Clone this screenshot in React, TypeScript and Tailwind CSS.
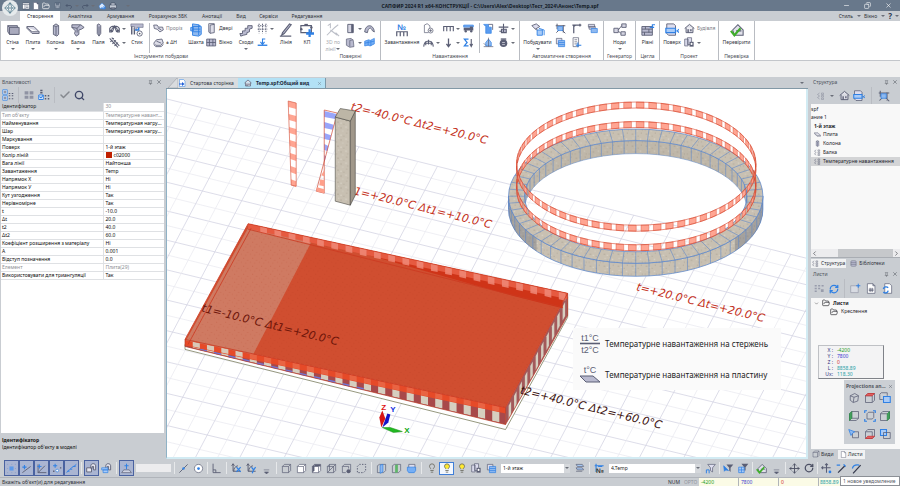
import type { ReactNode } from "react";
import { Check, ChevronDown, ChevronLeft, ChevronRight, Copy, FolderOpen, Lightbulb, Minus, Move, Pin, RefreshCw, RotateCw, Search, X } from "lucide-react";

const D = "#5a5e74";
const B = "#2f80e4";
const L = "#b9bacf";

// every drawing sits on a 16x16 board
const icons: Record<string, ReactNode> = {
  wall: <><path d="M2 3h11v10H4l-2-3z" fill="#a9aabd" stroke={D} /><path d="M2 3l2 2v8M4 5h11v8H4" fill="#a9aabd" stroke={D} /></>,
  slab: <path d="M1 4h8l6 6v2H7L1 6zM1 5l6 5h8" fill="#d5d5e2" stroke={D} />,
  column: <path d="M5 3l3-2 3 2v10l-2 2-4-2zM5 3l3 1 3-1M8 4v10" fill={L} stroke={D} />,
  beam: <path d="M1 2h10l4 3-3 2-3 1v5l-3 2-2-3 1-3-4-4zM11 2L7 6 1 5M7 6v5" fill={L} stroke={D} />,
  pile: <path d="M6 2l2-1 2 2v9l-2 3-2-3zM8 4v10" fill={L} stroke={D} />,
  truss: <path d="M1 13V8c2-5 12-5 14 0v5h-3V9L8 4 4 9v4zM5 13l3-8 3 8M1 9l3 4M15 9l-3 4" fill="none" stroke={D} strokeWidth="1.5" />,
  brace: <path d="M1 2l12 13M4 1l11 12M2 7l5-5M5 10l5-5M8 13l5-5" fill="none" stroke={D} strokeWidth="1.5" />,
  joint: <><path d="M2 3v10M5 5v8" stroke={D} strokeWidth="1.6" /><path d="M1 1h14v4H8v3H5V4H1z" fill={L} stroke={D} strokeWidth=".6" /><path d="M6 8h4V5" fill="none" stroke={B} strokeWidth="1.6" /><circle cx="11" cy="12" r="3" fill="#fff" stroke={D} /><circle cx="11" cy="12" r="1" fill={D} /></>,
  opening: <path d="M1 3h5l2 3h6l1 4-5 3-4-4-4-1zM7 7l5 3" fill="#dddde8" stroke={D} strokeWidth="1.2" />,
  shift: <path d="M1 9l4-5 8-1 2 6-4 3H4zM1 11l3 3h8l3-3M5 6l7 3" fill="#dddde8" stroke={D} strokeWidth="1.2" />,
  shaft: <path d="M4 1l7 1 3 2v9l-3 2-7-1zM4 4h9M4 7h9M4 10h9M11 2v12M2 5h3v4H2z" fill="#8fb9f0" stroke={B} />,
  door: <path d="M4 1h8v13l-6 1V3l6-1M4 1v12l2 2" fill="#dddde8" stroke={D} strokeWidth="1.2" />,
  window: <path d="M1 3h13v10H1zM5 3v10M10 3v10M1 8h13" fill={L} stroke={D} strokeWidth="1.2" />,
  stairs: <path d="M1 12h3v-3h3V6h3V3h5v3l-3 1v3l-3 1v2l-4 1-3 1z" fill={L} stroke={D} />,
  grid: <path d="M3 1v14M8 1v14M13 1v14M1 4h14M1 9h14" fill="none" stroke={D} strokeDasharray="2 1.4" strokeWidth="1.4" />,
  level: <><path d="M1 12h14" stroke={B} strokeWidth="2" /><path d="M12 3H8v6M5 7l3 4 3-4" fill="none" stroke={B} strokeWidth="1.6" /></>,
  line: <><path d="M4 11L12 1l2 1-8 10-3 2z" fill={L} stroke={D} strokeWidth="1.2" /><path d="M1 15h13" stroke={D} strokeWidth="1.4" /></>,
  kp: <><path d="M1 3h12v8H1z" fill="#fff" stroke={D} strokeWidth="1.3" /><path d="M5 1h4v2H5z" fill={D} /><circle cx="1.500" cy="7" r="1.400" fill={D} /><circle cx="13" cy="5" r="1.400" fill={D} /><path d="M11 7v9M7 12h9" stroke={B} strokeWidth="2.6" /></>,
  surf3d: <path d="M1 14l5-5c3-3 5-5 8-7M2 3l3-2v5M5 8l8 6M11 11l4 4" fill="none" stroke="#bcbfc8" strokeWidth="1.2" />,
  panel: <><path d="M4 2h8v12H4z" fill="#d5d5e2" stroke={D} strokeWidth="1.3" /><path d="M9 2h3v12H9z" fill={D} /></>,
  shell: <path d="M1 13C2 1 14 1 15 13l-3-2C10 5 6 7 5 14z" fill={L} stroke={D} strokeWidth="1.3" />,
  solid: <path d="M2 3l7-1 3 3 1 9-6 1-5-3zM7 5l5-1M7 5v9" fill={L} stroke={D} />,
  bluebox: <path d="M1 6l6-2 2 1 6-3v8l-6 3-3-1-5 1zM6 5v7M10 5v8M1 9l14-3" fill="#75aef5" stroke={B} />,
  number: <><text x="8" y="8" textAnchor="middle" fontSize="9" fontWeight="700" fontFamily="Liberation Sans" fill={B}>№</text><path d="M2 15v-5h12v5M6 10v5M10 10v5" fill="none" stroke={D} strokeWidth="1.4" /></>,
  loadbox: <><path d="M2 14V3l4-2 4 3v4M2 14h6" fill="none" stroke={D} /><circle cx="11" cy="11" r="3.6" fill="#eee" stroke={D} /><path d="M9 11h4M11 9v4" stroke={D} /></>,
  comb: <path d="M1 12V5h14v7M5.500 5v7M10.500 5v7" fill="none" stroke={D} strokeWidth="1.6" />,
  car: <><path d="M1 3h14v3H1z" fill="#79aef2" stroke={B} /><path d="M1 7h9v4H1zM10 5h4l1 3v3h-5z" fill={D} /><circle cx="4" cy="12" r="1.700" fill={D} /><circle cx="12" cy="12" r="1.700" fill={D} /></>,
  arcload: <path d="M1 14c1-11 13-11 14 0M4 12V6M8 11V4M12 12V6M3 9h9" fill="none" stroke={D} strokeWidth="1.6" />,
  down: <path d="M8 2v12M5 10l3 4 3-4" fill="none" stroke={D} strokeWidth="1.9" />,
  sum: <><path d="M8 3H2l4 5-4 5h6" fill="none" stroke={B} strokeWidth="1.8" /><path d="M12 3v10M10 10l2 4 2-4" fill="none" stroke={D} strokeWidth="1.6" /></>,
  wind: <><path d="M1 2h7v4h4v9H4V5z" fill="#5a9cf0" stroke={B} /><path d="M8 2h6v8" fill="none" stroke={D} strokeWidth="1.2" /></>,
  bluehouse: <><path d="M4 8l4-5 4 5v5H4z" fill="#8fb9f0" stroke={B} /><path d="M1 14h14M8 1v13M1 9l3 3" fill="none" stroke={D} /></>,
  crane: <path d="M1 6h14M8 1v13M5 14h7V9H5zM2 12h4" fill={L} stroke={D} strokeWidth="1.6" />,
  weight: <><circle cx="8" cy="9" r="5.500" fill={D} /><path d="M4 3h8" stroke={D} strokeWidth="2" /><path d="M6 8h4M6 11h4" stroke="#e6e6ee" /></>,
  build: <><path d="M1 3l5-2 4 3-5 3zM5 7l4 2" fill="#dde" stroke={D} /><path d="M7 8h6v6H7z" fill="#a9cbf7" stroke={B} /><path d="M9 6l6 2v6" fill="none" stroke={B} /></>,
  mesh: <><path d="M1 4h14M3 1v8M12 3v11M2 14l4-4M10 10l5 5" fill="none" stroke={D} strokeWidth="1.4" /><path d="M4 5h7v6H4z" fill="#8fb9f0" stroke={B} /></>,
  frame: <path d="M4 15V3h11M2 3h4M4 5l3-2M13 1v4" fill="none" stroke={D} strokeWidth="1.8" />,
  layers: <><path d="M2 2h8v8H2z" fill="#dde" stroke={D} /><path d="M5 5h9v9H5zM5 8h9M5 11h9" fill="#8fb9f0" stroke={B} /></>,
  steps: <><path d="M2 2h9v4H2zM3 5h9v4H3z" fill="#dde" stroke={D} /><path d="M6 8h9v6H6z" fill="#8fb9f0" stroke={B} /></>,
  sheet: <><path d="M3 1h8v13H3zM5 4h4M5 7h4M5 10h4" fill="#fff" stroke={D} /><path d="M10 8v7M7 12h8" stroke={B} strokeWidth="1.6" /></>,
  nodes: <path d="M1 6h5v5H1zM10 1h5v4h-5zM9 10h5v4H9zM6 8l4-5M6 9l3 3" fill="#d5d5e2" stroke={D} />,
  brick: <><path d="M1 4h12v10H1zM1 7h12M1 10.500h12M5 4v3M9 7v4M4 10.500V14" fill={L} stroke={D} /><path d="M16 2h-3v4M10 5h5" fill="none" stroke={B} strokeWidth="1.3" /></>,
  storey: <><path d="M2 1h8l2 2v11H4l-2-2z" fill="#dde" stroke={D} /><path d="M1 6h11v5H1z" fill="#a9cbf7" stroke={B} strokeWidth="1.4" /><path d="M16 7l-2 2 2 2M13 9h2" fill="none" stroke={B} strokeWidth="1.3" /></>,
  house: <><path d="M1 8l7-6 7 6M3 7v7h10V7" fill="#e1e1ea" stroke={D} strokeWidth="1.4" /><path d="M5 9h2v5H5zM9 9h2v3H9z" fill={D} /></>,
  copybox: <><path d="M1 3h5v10H1zM5 1h6v10H5z" fill="#dde" stroke={D} /><path d="M8 7h6v7H8z" fill={D} /><circle cx="11" cy="10" r="1.500" fill="#fff" /></>,
  verify: <><path d="M3 8l6-6 6 6v6H5zM7 9h6" fill="#e1e1ea" stroke={D} strokeWidth="1.2" /><path d="M1 9l4 5 7-8" fill="none" stroke="#3fae2a" strokeWidth="2.4" /></>,
  tree: <><path d="M1 1h6v6H1zM1 9h6v6H1z" fill="#eaf2fd" stroke={B} /><path d="M2 4h4M4 2v4M2 12h4M4 10v4" stroke={D} /><path d="M9 6h2M13 6h2M9 13h2M13 13h2M9 9h2M13 9h2" stroke={D} strokeWidth="1.6" /></>,
  cols: <path d="M1 2h6v5H1zM9 2h6v5H9zM1 9h6v5H1zM9 9h6v5H9z" fill="#8f93a3" />,
  treecheck: <><path d="M1 8h6v6H1z" fill="#fff" stroke={B} strokeWidth="1.3" /><path d="M2 10l2 2 3-4" fill="none" stroke={B} strokeWidth="1.500" /><path d="M3 2h3M9 9h2M13 9h2M9 13h2M13 13h2M3 5h3" stroke={D} strokeWidth="1.8" /></>,
  cube: <path d="M2 5l3-3h9v9l-3 3H2zM2 5h9v9M11 5l3-3" fill="none" stroke={D} />,
  cubeWhite: <path d="M2 5l3-3h9v9l-3 3H2zM2 5h9v9M11 5l3-3" fill="#fff" stroke={D} />,
  cubeDark: <><path d="M2 5l3-3h9v9l-3 3H2zM2 5h9v9" fill="#fff" stroke={D} /><path d="M2 5l3-3v9l-3 3z" fill={D} /><path d="M5 2h9v3H5z" fill={D} /></>,
  cubeCut: <path d="M2 5l3-3h9v9l-3 3H2zM2 5h9v9M2 14L14 2M5 2v9" fill="none" stroke={D} />,
  cubeEye: <><path d="M2 5l3-3h9v9M2 5v9h5M2 5h9v3" fill="none" stroke={D} /><circle cx="11" cy="12" r="3" fill={D} /></>,
  cubeDash: <path d="M2 5l3-3h9v9l-3 3H2z" fill="none" stroke={D} strokeDasharray="2 2" strokeWidth="1.400" />,
  cubeBlue: <><path d="M2 4l3-2h9v9l-3 3H2z" fill="none" stroke={D} /><path d="M6 3l4-1v11l-4 2z" fill="#8fb9f0" stroke={B} /></>,
  cubeGreen: <><path d="M2 4l3-2h9v9l-3 3H2z" fill="none" stroke={D} /><path d="M6 3l4-1v11l-4 2z" fill="#5fb56a" /></>,
  cubeFull: <><path d="M4 2h9v8H4z" fill="#dde" stroke={D} /><path d="M2 6h12v5l-2 3H4l-2-3z" fill="#75aef5" stroke={B} /></>,
  cubeTop: <><path d="M2 5l3-3h9v9l-3 3H2zM2 5h9v9" fill="none" stroke={D} /><path d="M2 5l3-3h9l-3 3z" fill="#e06060" stroke="#c33" /></>,
  cubeBottom: <><path d="M2 5l3-3h9v9l-3 3H2zM2 5h9v9" fill="none" stroke={D} /><path d="M2 14l3-3h9l-3 3z" fill="#e06060" stroke="#c33" /></>,
  cubeLeft: <><path d="M2 5l3-3h9v9l-3 3H2zM5 2v9h9" fill="none" stroke={D} /><path d="M2 5l3-3v9l-3 3z" fill="#41a05a" stroke="#2d8a47" /></>,
  cubeRight: <><path d="M2 5l3-3h9v9l-3 3H2zM2 5h9" fill="none" stroke={D} /><path d="M11 5l3-3v9l-3 3z" fill="#41a05a" stroke="#2d8a47" /></>,
  cubeFront: <><path d="M1 3l2-2h8v4M1 3v7h4" fill="none" stroke={D} /><path d="M6 6h9v8H6z" fill="#a9cbf7" stroke={B} strokeWidth="1.4" /></>,
  cubeIso: <path d="M3 5l6-3 5 3-1 7-6 2-4-3zM3 5l5 2 6-2M8 7l-1 7" fill="none" stroke={D} />,
  cubeFit: <><path d="M4 5l2-2h7v7l-2 2H4z" fill="none" stroke={D} /><path d="M1 4V1h3M12 1h3v3M15 12v3h-3M4 15H1v-3" fill="none" stroke={B} strokeWidth="1.600" /></>,
  cubePick: <><path d="M6 5h8v8H6z" fill="none" stroke={D} /><path d="M1 2l3 8 2-3 3-2z" fill="#8fb9f0" stroke={B} /></>,
  cubeTwo: <><path d="M2 2h8v8H2z" fill="#a9cbf7" stroke={B} strokeWidth="1.4" /><path d="M6 6h9v8H6z" fill="none" stroke={D} /></>,
  snapPoint: <><path d="M5 5h6v6H5z" fill="#5e9bea" /><path d="M2 2h1M8 2h1M13 2h1M2 8h1M13 8h1M2 14h1M8 14h1M13 14h1" stroke="#6f8fc4" /></>,
  snapLine: <><path d="M2 14L14 5" stroke={D} strokeWidth="1.3" /><path d="M2 6h6M5 3v6" stroke={B} strokeWidth="1.5" /></>,
  snapAngle: <><path d="M3 2v12h12M3 14L13 4" fill="none" stroke={D} strokeWidth="1.3" /><path d="M2 5h6M5 2v6" stroke={B} strokeWidth="1.4" /></>,
  snapDots: <><path d="M3 4h6M6 1v6" stroke={B} strokeWidth="1.5" /><circle cx="9" cy="11" r="2" fill="#fff" stroke={B} /><path d="M3 12h2M13 7h2" stroke={D} strokeWidth="2" /></>,
  snapCurve: <path d="M1 14c3-5 4-3 6-6s4-2 8-6M2 12h3M6 9h3M11 5h3" fill="none" stroke={B} strokeWidth="1.4" />,
  magnet: <path d="M1 7h7v6H1zM7 8V4c0-4 7-4 7 0v6h-3V5H9v3" fill="#e5e5ee" stroke={D} strokeWidth="1.3" />,
  magnetBlue: <><path d="M7 8V4c0-4 7-4 7 0v6h-3V5H9v3" fill="#e5e5ee" stroke={D} strokeWidth="1.3" /><path d="M1 7h9v3H1zM3 10h7v4H3z" fill="#a9cbf7" stroke={B} /></>,
  plane: <><path d="M1 14l3-4h8l3 4z" fill="#d0d4e4" stroke={D} /><path d="M8 1v8M5 4h6" stroke={B} strokeWidth="1.4" /></>,
  seg: <><path d="M2 14L14 2" stroke={D} strokeWidth="1.3" /><circle cx="8" cy="8" r="1.800" fill={B} /></>,
  center: <><circle cx="8" cy="8" r="6" fill="#fff" stroke={D} /><circle cx="8" cy="8" r="2" fill={B} /></>,
  ortho: <path d="M3 1v13h11M3 10h4v4" fill="none" stroke={D} strokeWidth="1.3" />,
  rotX: <><path d="M3 2v10h11M1 4l2-3 2 3M4 12a8 8 0 0 1 6-8" fill="none" stroke={D} strokeWidth="1.4" /><path d="M8 6l6 7M14 6l-6 7" stroke={B} strokeWidth="1.800" /></>,
  rotY: <><path d="M3 2v10h11M1 4l2-3 2 3M4 12a8 8 0 0 1 6-8" fill="none" stroke={D} strokeWidth="1.4" /><path d="M8 6l3 4 3-4M11 10l-2 5" fill="none" stroke={B} strokeWidth="1.800" /></>,
  more: <path d="M4 10h8M5 13h6l-3 3z" fill={D} stroke={D} strokeWidth=".8" />,
  stack: <path d="M3 2h9l2 3H5zM3 7h9l2 3H5zM3 12h9" fill="#a9cbf7" stroke={D} />,
  loadNo: <><path d="M1 4h13M3 1v12M6 5h6" fill="none" stroke={B} strokeWidth="1.600" /><text x="9" y="15" textAnchor="middle" fontSize="10" fontWeight="700" fontFamily="Liberation Sans" fill="#333">№</text></>,
  funnel: <><path d="M4 2h11l-4 5v6l-3-2V7z" fill="#dde" stroke={D} /><path d="M2 15v-5h4v5" fill="none" stroke={B} strokeWidth="1.4" /></>,
  funnelPick: <><path d="M5 2h10l-4 5v6l-2-2V7z" fill={D} /><path d="M1 4l1 8 2-2 4 1z" fill={B} stroke={B} /></>,
  funnelTable: <><path d="M5 1h10l-4 5v5H9V6z" fill={D} /><path d="M1 6h8v8H1zM1 10h8M5 6v8" fill="#a9cbf7" stroke={B} /></>,
  moveBlue: <><path d="M8 1v13M1 7h13M6 3l2-2 2 2M3 5L1 7l2 2" fill="none" stroke={D} strokeWidth="1.500" /><circle cx="13" cy="13" r="2" fill={B} /></>,
  edit: <><path d="M3 14L13 4" stroke="#34384c" strokeWidth="1.800" /><path d="M1 3h5M11 2l3 3" stroke={B} strokeWidth="2" /></>,
  editTwo: <><path d="M3 15L14 3" stroke="#34384c" strokeWidth="1.800" /><path d="M2 8c1-4 5-6 10-5" fill="none" stroke={B} strokeWidth="1.800" /></>,
  doc: <path d="M3 1h7l3 3v11H3zM10 1v3h3" fill="#fff" stroke={D} />,
  docHash: <><path d="M2 1h8l3 3v11H2zM10 1v3h3" fill="#fff" stroke={D} /><path d="M6 7v6M9 7v6M4 9h7M4 11h7" stroke={D} strokeWidth="1.1" /></>,
  docSync: <><path d="M4 1h7l3 3v11H4z" fill="#fff" stroke={D} /><path d="M2 9a4 4 0 0 1 7-2M9 11a4 4 0 0 1-7 2" fill="none" stroke={B} strokeWidth="2" /></>,
  gridgear: <path d="M1 3h3v2H1zM6 3h3v2H6zM11 3h3v2h-3zM1 7h3v2H1zM6 7h3v2H6zM1 11h3v2H1zM10 9h4v4h-4z" fill="#989cab" />,
  addpage: <><path d="M1 4h11v10H1z" fill="#d8dbe2" stroke="#9599a8" /><path d="M12 1v6M9 4h6" stroke={B} strokeWidth="1.4" /></>,
  lib: <path d="M2 3c0-2 12-2 12 0v10c0 2-12 2-12 0zM2 6h12M2 10h12" fill={L} stroke={D} />,
  load: <path d="M5 2L1 5l4 3-4 3 4 3M9 2h4v3H9zM9 7h4v3H9zM9 12h4v3H9z" fill="none" stroke={D} />,
  logo: <path d="M8 1l7 7-7 7-7-7zM1 8h14M8 1L5 8l3 7 3-7z" fill="#fff" stroke="#4d7688" />,
  save: <path d="M2 2h12v12H2zM5 2v4h6V2M4 14V9h8v5" fill="#aab4c2" stroke="#45526a" />,
  panels: <path d="M1 2h14v12H1zM1 5h14M6 5v9M8 8h5M8 11h5" fill="#fff" stroke="#38465c" />,
  undo: <path d="M5 4L2 7l3 3M2 7h8c4 0 4 6 0 6" fill="none" stroke="#46536a" strokeWidth="1.6" />,
  redo: <path d="M11 4l3 3-3 3M14 7H6c-4 0-4 6 0 6" fill="none" stroke="#46536a" strokeWidth="1.6" />,
  exportHouse: <><path d="M2 8l6-6 6 6v5H4z" fill="#d8e7fb" stroke={B} /><path d="M6 12h8M11 9l4 3-4 3" fill="none" stroke={B} strokeWidth="1.8" /></>,
  start: <><path d="M3 1h8l3 3v11H3z" fill="#fff" stroke={B} /><path d="M8 6l5 4-5 4v-3H2V9h6z" fill="#1f5fd8" /></>,
  print: <path d="M4 6V2h8v4M1 6h14v6H1zM4 12h8v2H4z" fill="#c4cbd6" stroke="#2f3b50" />,
};

const Icon = ({ name, className = "size-3" }: { name: string; className?: string }) => (
  <svg viewBox="0 0 16 16" className={`shrink-0 ${className}`} aria-hidden="true">{icons[name]}</svg>
);

const Arrow = () => (
  <svg viewBox="0 0 4 2" className="h-[2px] w-1 shrink-0" aria-hidden="true"><path d="M0 0h4L2 2z" fill="#6a6e78" /></svg>
);

const Tile = ({ icon, label, arrow, w, muted, second }: { icon: string; label: string; arrow?: boolean; w: string; muted?: boolean; second?: string }) => (
  <button className={`flex shrink-0 flex-col items-center ${w} ${muted ? "text-[#a4a7ad]" : ""}`}>
    <Icon name={icon} className="size-[14px]" />
    <span className="mt-[2px] whitespace-nowrap leading-[7px]">{label}</span>
    {second && <span className="flex items-center gap-px leading-[6px]">{second}<Arrow /></span>}
    {arrow && <span className="mt-[2px]"><Arrow /></span>}
  </button>
);

type Small = { icon: string; text?: string; arrow?: boolean; muted?: boolean };

const Pair = ({ items, w }: { items: Small[]; w: string }) => (
  <div className={`flex shrink-0 flex-col gap-[3px] ${w}`}>
    {items.map((it) => (
      <button key={it.icon} aria-label={it.text ?? it.icon} className={`flex h-[11px] items-center gap-[2px] whitespace-nowrap ${it.muted ? "text-[#7b7e86]" : ""}`}>
        <Icon name={it.icon} className="size-[11px]" />
        {it.text}
        {it.arrow && <Arrow />}
      </button>
    ))}
  </div>
);

const Group = ({ title, w, children }: { title: string; w: string; children: ReactNode }) => (
  <section className={`flex h-[39px] shrink-0 flex-col border-r border-[#b9bcc2] pt-[2px] ${w}`}>
    <div className="flex h-[30px]">{children}</div>
    <h2 className="text-center leading-[6px] text-[#4b4e55]">{title}</h2>
  </section>
);

const Rule = () => <span className="mx-[3px] w-px shrink-0 self-stretch bg-[#b9bcc2]" />;

const TitleBar = () => (
  <header className="flex h-[11px] shrink-0 items-center bg-[#68788b] pl-[22px]">
    <div className="flex w-[110px] items-center gap-[2px]">
      <Icon name="panels" className="size-2" />
      <Icon name="doc" className="size-2" />
      <FolderOpen className="size-2 text-white" />
      <Icon name="save" className="mx-[2px] size-[7px]" />
      <Icon name="undo" className="size-2" />
      <Arrow />
      <Icon name="redo" className="size-2" />
      <Arrow />
      <Icon name="exportHouse" className="ml-px size-2" />
      <Icon name="print" className="mx-px size-2" />
      <span className="ml-[6px]"><Arrow /></span>
    </div>
    <h1 className="flex-1 pl-6 text-center text-[5px] font-bold leading-[10px] text-[#141b26]">
      САПФИР 2024 R1 x64-КОНСТРУКЦІЇ - C:\Users\Alex\Desktop\Тест_2024\Анонс\Temp.spf
    </h1>
    <div className="flex w-[76px] gap-[14px] pl-[19px] text-white">
      <button aria-label="Згорнути"><Minus className="size-[7px]" /></button>
      <button aria-label="Розгорнути"><Copy className="size-[7px] -scale-x-100" /></button>
      <button aria-label="Закрити"><X className="size-[7px]" /></button>
    </div>
  </header>
);

const ribbonTabs = [
  ["Аналітика", "w-[40px]"],
  ["Армування", "w-[41px]"],
  ["Розрахунок ЗБК", "w-[54px]"],
  ["Анотації", "w-[34px]"],
  ["Вид", "w-[24px]"],
  ["Сервіси", "w-[31px]"],
  ["Редагування", "w-[46px]"],
];

const RibbonTabs = () => (
  <nav className="flex h-[10px] shrink-0 items-center bg-[#c9cdd2] pl-5 text-center leading-[10px]">
    <button className="w-10 self-stretch bg-white">Створення</button>
    {ribbonTabs.map(([name, w]) => (
      <button key={name} className={`whitespace-nowrap ${w}`}>{name}</button>
    ))}
    <div className="ml-auto flex items-center gap-[3px] pr-px">
      <button className="flex items-center gap-1">Стиль <Arrow /></button>
      <button className="flex items-center gap-1">Вікно <Arrow /></button>
      <button className="flex items-center gap-[3px] text-[8px] font-bold text-[#2b3550]">? <Arrow /></button>
    </div>
  </nav>
);

const Ribbon = () => (
  <div className="flex h-10 shrink-0 overflow-hidden border-l border-b border-[#c3c6cb] bg-white pl-px">
    <Group title="Інструменти побудови" w="w-[319px]">
      <Tile icon="wall" label="Стіна" arrow w="w-[21px]" />
      <Tile icon="slab" label="Плита" arrow w="w-[20px]" />
      <Tile icon="column" label="Колона" arrow w="w-[25px]" />
      <Tile icon="beam" label="Балка" arrow w="w-[20px]" />
      <Tile icon="pile" label="Паля" w="w-[21px]" />
      <Pair w="w-[19px]" items={[{ icon: "truss", arrow: true }, { icon: "brace", arrow: true }]} />
      <Tile icon="joint" label="Стик" w="w-[18px]" />
      <Rule />
      <Pair w="w-[33px]" items={[{ icon: "opening", text: "Проріз", muted: true }, { icon: "shift", text: "± ΔН" }]} />
      <Tile icon="shaft" label="Шахта" w="w-[20px]" />
      <Pair w="w-[29px]" items={[{ icon: "door", text: "Двері" }, { icon: "window", text: "Вікно" }]} />
      <Tile icon="stairs" label="Сходи" arrow w="w-[22px]" />
      <Pair w="w-[18px]" items={[{ icon: "grid", arrow: true }, { icon: "level" }]} />
      <Tile icon="line" label="Лінія" w="w-[22px]" />
      <Tile icon="kp" label="КП" w="w-[20px]" />
    </Group>
    <Group title="Поверхні" w="w-[60px]">
      <Tile icon="surf3d" label="3D по" second="лінії" muted w="w-[24px]" />
      <Pair w="w-[19px]" items={[{ icon: "panel", arrow: true }, { icon: "solid", arrow: true }]} />
      <Pair w="w-[14px]" items={[{ icon: "shell" }, { icon: "bluebox" }]} />
    </Group>
    <Group title="Навантаження" w="w-[139px]">
      <Tile icon="number" label="Завантаження" w="w-[42px]" />
      <Pair w="w-[20px]" items={[{ icon: "loadbox" }, { icon: "arcload", arrow: true }]} />
      <Pair w="w-[20px]" items={[{ icon: "comb", arrow: true }, { icon: "down", arrow: true }]} />
      <Pair w="w-[13px]" items={[{ icon: "car" }, { icon: "sum" }]} />
      <Rule />
      <Pair w="w-[15px]" items={[{ icon: "wind" }, { icon: "bluehouse" }]} />
      <Pair w="w-[19px]" items={[{ icon: "crane", arrow: true }, { icon: "weight", arrow: true }]} />
    </Group>
    <Group title="Автоматичне створення" w="w-[84px]">
      <Tile icon="build" label="Побудувати" arrow w="w-[35px]" />
      <Pair w="w-[16px]" items={[{ icon: "mesh" }, { icon: "layers" }]} />
      <Pair w="w-[16px]" items={[{ icon: "frame" }, { icon: "sheet" }]} />
      <Pair w="w-[14px]" items={[{ icon: "steps" }]} />
    </Group>
    <Group title="Генератор" w="w-[32px]">
      <Tile icon="nodes" label="Ноди" arrow w="w-[31px]" />
    </Group>
    <Group title="Цегла" w="w-[24px]">
      <Tile icon="brick" label="Рівні" w="w-[23px]" />
    </Group>
    <Group title="Проект" w="w-[59px]">
      <Tile icon="storey" label="Поверх" w="w-[24px]" />
      <Pair w="w-[34px]" items={[{ icon: "house", text: "Будівля", muted: true }, { icon: "copybox", arrow: true }]} />
    </Group>
    <Group title="Перевірка" w="w-[36px]">
      <Tile icon="verify" label="Перевірити" w="w-[35px]" />
    </Group>
  </div>
);

const PanelHead = ({ title }: { title: string }) => (
  <div className="flex h-[10px] shrink-0 items-center px-[2px] leading-[10px] text-[#4d525b]">
    <h2 className="flex-1">{title}</h2>
    <button aria-label="Закріпити"><Pin className="mr-[3px] size-[5px]" /></button>
    <button aria-label="Закрити панель"><X className="size-[6px]" /></button>
  </div>
);

const props = [
  ["Ідентифікатор", "30"],
  ["Тип об'єкту", "Температурне навант..."],
  ["Найменування", "Температурная нагру..."],
  ["Шар", "Температурная нагру..."],
  ["Маркування", ""],
  ["Поверх", "1-й этаж"],
  ["Колір ліній", "c02000"],
  ["Вага лінії", "Найтонша"],
  ["Завантаження", "Temp"],
  ["Напрямок X", "Ні"],
  ["Напрямок У", "Ні"],
  ["Кут узгодження", "Так"],
  ["Нерівномірне", "Так"],
  ["t", "-10.0"],
  ["Δt", "20.0"],
  ["t2", "40.0"],
  ["Δt2", "60.0"],
  ["Коефіцієнт розширення з матеріалу", "Ні"],
  ["A", "0.001"],
  ["Відступ позначення", "0.0"],
  ["Елемент", "Плита(29)"],
  ["Використовувати для триангуляції", "Так"],
];
const readOnly = ["Ідентифікатор", "Тип об'єкту", "Елемент"];

const Properties = () => (
  <aside className="flex w-[164px] shrink-0 flex-col bg-[#c9cdd2]">
    <PanelHead title="Властивості" />
    <div className="flex h-4 shrink-0 items-center gap-px pl-[2px]">
      <Icon name="tree" />
      <Rule />
      <Icon name="cols" className="mx-px size-[10px]" />
      <Icon name="treecheck" className="ml-[2px] size-3" />
      <Rule />
      <Check className="size-3 text-[#85898f]" strokeWidth={3} />
      <Search className="ml-[2px] size-[11px] text-[#3f4768]" strokeWidth={3} />
    </div>
    <div className="ml-px min-h-0 flex-1 overflow-hidden bg-white">
      <table className="w-full table-fixed border-collapse text-[5px] leading-[7px] text-[#0c0c0c]">
        <tbody>
          {props.map(([name, value], i) => (
            <tr key={name} className={`h-2 border-b border-[#dfe1e4] ${readOnly.includes(name) ? "text-[#8e9095]" : ""}`}>
              <th scope="row" className={`w-[102px] whitespace-nowrap border-r border-[#dfe1e4] p-0 pl-px text-left font-normal ${i === 0 ? "bg-[#c9cdd2] text-[#1c1c1c]" : ""}`}>{name}</th>
              <td className="whitespace-nowrap p-0 pl-[2px]">
                {value === "c02000" && <span className="mr-[2px] inline-block size-[6px] bg-[#c02000] align-top" />}
                {value}
              </td>
            </tr>
          ))}
        </tbody>
      </table>
    </div>
    <div className="h-[26px] shrink-0 pl-[2px] pt-1 leading-[7px] text-[#111]">
      <p className="font-bold">Ідентифікатор</p>
      <p>Ідентифікатор об'єкту в моделі</p>
    </div>
  </aside>
);

type Pt = [number, number];
const mix = (a: Pt, b: Pt, t: number): Pt => [a[0] + (b[0] - a[0]) * t, a[1] + (b[1] - a[1]) * t];
const poly = (...pts: Pt[]) => pts.map((p) => `${p[0].toFixed(1)},${p[1].toFixed(1)}`).join(" ");
const onEllipse = (cx: number, cy: number, rx: number, ry: number, a: number): Pt => [cx + rx * Math.cos(a), cy + ry * Math.sin(a)];

const Floor = () => {
  const lines: ReactNode[] = [];
  for (let i = 0; i < 40; i++) {
    const y = 99 + i * 13.5 + i * i * 0.06;
    const slope = 0.249 - i * 0.0006;
    lines.push(<line key={`a${i}`} x1="168" y1={y} x2="1400" y2={y + slope * 1232} stroke={i % 2 ? "#ebebf1" : "#d5d5e4"} />);
  }
  for (let i = 0; i < 90; i++) {
    const x = -150 + i * 19.6;
    // start each line on the far edge of the floor
    const y = 99 + 0.249 * (x - 168);
    lines.push(<line key={`b${i}`} x1={x} y1={y} x2={x - 400} y2={y + 760} stroke={i % 2 ? "#ebebf1" : "#d5d5e4"} />);
  }
  return <g strokeWidth="0.8">{lines}</g>;
};

const Ring = () => {
  const n = 60;
  const cells = Array.from({ length: n }, (_, i) => (i / n) * Math.PI * 2);
  const step = (Math.PI * 2) / n;
  return (
    <g>
      <path fillRule="evenodd" d="M525 196a111 55.500 0 0 1 222 0v13a111 55.500 0 0 0 -222 0z" fill="url(#stone)" stroke="#6f93cc" strokeWidth="0.6" />
      <path d="M525 196a111 55.500 0 0 1 222 0v13a111 55.500 0 0 0 -222 0z" fill="#8a8577" opacity="0.15" />
      <path d="M509 196a127 67 0 0 0 254 0v13a127 67 0 0 1 -254 0z" fill="url(#stone)" stroke="#5583cc" strokeWidth="0.7" />
      <path d="M509 196v13a127 67 0 0 0 28 42v-13a127 67 0 0 1 -28 -42zM763 196v13a127 67 0 0 1 -28 42v-13a127 67 0 0 0 28 -42z" fill="#545b6c" opacity="0.3" />
      <path fillRule="evenodd" d="M509 196a127 67 0 1 1 254 0a127 67 0 1 1 -254 0zM525 196a111 55.500 0 1 0 222 0a111 55.500 0 1 0 -222 0z" fill="url(#stone)" stroke="#5583cc" strokeWidth="0.7" />
      <g stroke="#5f88c8" strokeWidth="0.6">
        {cells.map((a) => {
          const o = onEllipse(636, 196, 127, 67, a);
          const p = onEllipse(636, 196, 111, 55.5, a);
          const q = Math.sin(a) > 0 ? o : p;
          return (
            <g key={a}>
              <line x1={o[0]} y1={o[1]} x2={p[0]} y2={p[1]} />
              <line x1={q[0]} y1={q[1]} x2={q[0]} y2={q[1] + 13} />
            </g>
          );
        })}
      </g>
      {[183, 163.5].map((cy) => (
        <g key={cy} stroke="#d6442c" strokeWidth="0.6">
          {cells.map((a) => {
            const s = onEllipse(636.5, cy, 119.5, 61.5, a);
            const e = onEllipse(636.5, cy, 119.5, 61.5, a + step * 0.62);
            return <polygon key={a} points={poly(s, e, [e[0], e[1] + 6], [s[0], s[1] + 6])} fill="#ffa592" strokeWidth="0.4" />;
          })}
          <ellipse cx="636.5" cy={cy} rx="119.5" ry="61.5" fill="none" />
          <ellipse cx="636.5" cy={cy + 6} rx="119.5" ry="61.5" fill="none" />
        </g>
      ))}
    </g>
  );
};

const Slab = () => {
  const A: Pt = [249, 223.5];
  const Bk: Pt = [568, 293];
  const F: Pt = [506, 407];
  const W: Pt = [186, 339];
  const count = 22;
  const starts = Array.from({ length: count }, (_, i) => 0.024 + i * 0.0445);
  const drop = (p: Pt, d: number): Pt => [p[0], p[1] + d];
  return (
    <g>
      <path d="M186 344v5l320 80 62-112v-20" fill="#fff" stroke="#7d8060" strokeWidth="0.8" />
      <polygon points="186,339 506,407 506,424 186,346" fill="#a8494a" />
      <polygon points="506,407 568,293 568,315 506,424" fill="#a3595a" />
      {starts.map((t) => {
        const s = mix(W, F, t);
        const e = mix(W, F, Math.min(t + 0.0222, 1));
        const low = 6.5 + t * 10;
        return (
          <g key={t}>
            {t < 0.55 && <polygon points={poly(drop(e, low - 1), drop(mix(W, F, t + 0.044), low - 1), drop(mix(W, F, t + 0.044), low + 1), drop(e, low + 1))} fill="#6f78d8" />}
            <polygon points={poly(drop(s, 5), drop(e, 5), drop(e, low), drop(s, low))} fill="#d6cfc0" />
          </g>
        );
      })}
      <polygon points="186,339 506,407 506,413 186,345" fill="#e64a28" />
      {starts.map((t) => {
        const s = mix(W, F, t);
        const e = mix(W, F, Math.min(t + 0.0222, 1));
        return <polygon key={t} points={poly(drop(s, 0.5), drop(e, 0.5), drop(e, 5.5), drop(s, 5.5))} fill={t < 0.2 ? "#d9c9b8" : "#e96443"} />;
      })}
      {Array.from({ length: 11 }, (_, i) => {
        const s = mix(F, Bk, 0.05 + i * 0.087);
        const e = mix(F, Bk, 0.09 + i * 0.087);
        return <polygon key={i} points={poly(drop(s, 4), drop(e, 4), drop(e, 18), drop(s, 18))} fill="#d6cfc0" />;
      })}
      <polygon points={poly(A, Bk, F, W)} fill="#d04e30" />
      <polygon points="250,226 313,240 254,354 187,340" fill="#cf7a62" />
      <polygon points={poly(A, Bk, F, W)} fill="url(#specks)" opacity="0.25" />
      <polygon points="320,241 563,293 563,308 515,296" fill="#cf3418" />
      <polygon points={poly(A, Bk, drop(Bk, 6), drop(A, 5))} fill="#e65a40" />
      {starts.map((t) => {
        const s = mix(A, Bk, t + 0.014);
        const e = mix(A, Bk, Math.min(t + 0.035, 1));
        return <polygon key={t} points={poly(s, e, drop(e, 6 + t * 2), drop(s, 6 + t * 2))} fill="#ee8a78" opacity="0.85" />;
      })}
      <path d="M249 223.500L186 339l320 68 62-114zM249 229l314 78M252 228l-63 116" fill="none" stroke="#cc3a20" strokeWidth="0.8" />
      <path d="M186 339v7l320 78v-17M506 424l62-109v-22" fill="none" stroke="#b73822" strokeWidth="0.7" />
    </g>
  );
};

const Column = () => (
  <g>
    {Array.from({ length: 7 }, (_, i) => {
      const y = 101 + i * 13;
      return <polygon key={i} points={poly([289 + i * 0.45, y], [297, y + 2], [297, y + 8], [289.3 + i * 0.45, y + 6])} fill="#ffa592" />;
    })}
    <path d="M289 101l8 2v83l-5-1z" fill="none" stroke="#d8604a" strokeWidth="0.7" />
    {[0, 1, 2, 3, 4].map((i) => (
      <polygon key={i} points={poly([325, 111 + i * 11], [337 - i * 2.6, 114 + i * 10.6], [336 - i * 2.6, 119 + i * 10.6], [325, 117 + i * 11])} fill="#98a5fa" />
    ))}
    <path d="M338 113l-13-3v83l-8-2z" fill="none" stroke="#cf4a36" strokeWidth="0.7" />
    <path d="M325 170v6l-3-1zM321 179l4 1v6l-5-1zM318 187l7 2v4l-8-2z" fill="#ff9f8a" />
    <g stroke="#4c4a44" strokeWidth="0.6">
      <polygon points="336,117 351,121 351,205 336,201" fill="url(#stone)" />
      <polygon points="351,121 356,111 356,195 351,205" fill="#a0978a" />
      <polygon points="336,117 341,108.500 356,111 351,121" fill="#bdb6a6" />
    </g>
  </g>
);

const labels = [
  { text: "t2=-40.0°C Δt2=+20.0°C", x: 351, y: 110, fill: "#c4301a" },
  { text: "t1=+20.0°C Δt1=+10.0°C", x: 350, y: 193, fill: "#c4301a" },
  { text: "t1=-10.0°C Δt1=+20.0°C", x: 202, y: 311, fill: "#6d150a" },
  { text: "t2=+40.0°C Δt2=+60.0°C", x: 520, y: 393, fill: "#3c1210" },
  { text: "t=+20.0°C Δt=+20.0°C", x: 636, y: 290, fill: "#c4301a" },
];

const SceneLabels = ({ items }: { items: typeof labels }) => (
  <g fontFamily="DejaVu Sans, Verdana, sans-serif" fontStyle="italic" fontSize="11">
    {items.map((l) => (
      <text key={l.text} x={l.x} y={l.y} fill={l.fill} transform={`rotate(14 ${l.x} ${l.y})`}>{l.text}</text>
    ))}
  </g>
);

const Scene = () => (
  <svg viewBox="168 89 638 368" preserveAspectRatio="xMinYMin slice" className="block h-full w-full bg-white" role="img" aria-label="Temp.spf">
    <defs>
      <pattern id="stone" width="14" height="12" patternUnits="userSpaceOnUse">
        <rect width="14" height="12" fill="#c8c0b2" />
        <path d="M2 2h1.500M8 4h1M5 8h1.500M12 10h1M11 1h1M1 10h1" stroke="#aaa191" strokeWidth="0.8" />
        <path d="M5 3h1.500M10 7h1.500M3 6h1M7 11h1" stroke="#dbd5c9" strokeWidth="1" />
      </pattern>
      <pattern id="specks" width="9" height="8" patternUnits="userSpaceOnUse">
        <path d="M1 2h1M5 4h1M3 7h1M8 6h.8" stroke="#a83318" strokeWidth="0.8" />
      </pattern>
    </defs>
    <Floor />
    <Ring />
    <SceneLabels items={labels.slice(0, 2)} />
    <Column />
    <Slab />
    <SceneLabels items={labels.slice(2)} />
    <g fontFamily="Liberation Sans, Arial, sans-serif" fontSize="8" fontWeight="700">
      <path d="M383 427l5-14 3 1-2 8z" fill="#1414c8" />
      <path d="M382 427l-2-10 3-7 3 8z" fill="#d81414" />
      <path d="M383 427l8 0 12 4-9 1z" fill="#22b822" stroke="#169016" strokeWidth="0.5" />
      <text x="382" y="409" fill="#e01414">Z</text>
      <text x="391" y="411" fill="#1432e0">Y</text>
      <text x="405" y="432" fill="#12a812">X</text>
    </g>
  </svg>
);

const Legend = () => (
  <div className="absolute left-[406px] top-[239px] flex h-[62px] w-[208px] flex-col justify-around bg-[#fafafa] pl-[6px] font-['Noto_Sans',sans-serif] text-[8px] leading-3 text-[#1e1e26]">
    <div className="flex items-center gap-1">
      <svg viewBox="0 0 22 22" className="size-[22px]" aria-hidden="true">
        <text x="11" y="8" textAnchor="middle" fontSize="9" fontFamily="Liberation Sans" fill={D}>t1°C</text>
        <path d="M1 10.500h20" stroke={D} strokeWidth="1.6" />
        <text x="11" y="20" textAnchor="middle" fontSize="9" fontFamily="Liberation Sans" fill={D}>t2°C</text>
      </svg>
      <span className="whitespace-nowrap">Температурне навантаження на стержень</span>
    </div>
    <div className="flex items-center gap-1">
      <svg viewBox="0 0 22 22" className="size-[22px]" aria-hidden="true">
        <text x="11" y="9" textAnchor="middle" fontSize="9" fontFamily="Liberation Sans" fill={D}>t°C</text>
        <path d="M1 12h13l7 6H7z" fill={L} stroke={D} />
      </svg>
      <span className="whitespace-nowrap">Температурне навантаження на пластину</span>
    </div>
  </div>
);

const Workspace = () => (
  <main className="ml-[2px] flex min-w-0 flex-1 flex-col">
    <div className="flex h-3 shrink-0 items-end border-b border-[#8298a6] pl-[2px]">
      <svg viewBox="0 0 10 10" className="size-[10px]" aria-hidden="true"><path d="M0 10L9 0h1v10z" fill="#d9dcdf" stroke="#9a9ea4" strokeWidth="0.6" /></svg>
      <button className="flex h-[10px] items-center gap-1 bg-[#d9dcdf] pr-1 leading-[9px]">
        <Icon name="start" className="size-2" />Стартова сторінка
      </button>
      <div className="flex h-[10px] items-center gap-1 border-r border-[#7d98a8] bg-[#b3e1f5] pl-[6px] pr-[3px] font-bold leading-[9px] text-[#1c2a3a]">
        <Icon name="house" className="size-2" />
        <button className="whitespace-nowrap">Temp.spf:Общий вид</button>
        <button aria-label="Закрити вкладку"><X className="ml-1 size-[5px] text-[#6b7a86]" /></button>
      </div>
      <button aria-label="Список вкладок" className="mb-1 ml-auto mr-1"><Arrow /></button>
    </div>
    <div className="relative min-h-0 flex-1 overflow-hidden border-b-2 border-l border-r-2 border-[#d2ebf3] border-l-[#8fb2c6]">
      <Scene />
      <Legend />
    </div>
  </main>
);

const structure = [
  ["slab", "Плита"],
  ["column", "Колона"],
  ["load", "Балка"],
  ["load", "Температурне навантаження"],
];

const views = ["cubeIso", "cubeTop", "cubeFront", "cubeLeft", "cubeFit", "cubeRight", "cubePick", "cubeBottom", "cubeTwo"];

const coords = [
  ["X :", "-4200", "text-[#1fa01f]"],
  ["Y :", "7800", "text-[#3b3bd0]"],
  ["Z :", "0", "text-[#d03030]"],
  ["L :", "8858.89", "text-[#1e9ea6]"],
  ["Ux:", "118.30", "text-[#1e9ea6]"],
];

const Sidebar = () => (
  <aside className="ml-[2px] flex w-[90px] shrink-0 flex-col overflow-hidden pl-px">
    <PanelHead title="Структура" />
    <div className="flex h-[17px] shrink-0 items-center gap-[3px] pl-[6px]">
      <Icon name="load" className="mr-[2px] size-2 opacity-60" />
      <Arrow />
      <Icon name="house" className="ml-[2px] size-[11px]" />
      <Icon name="storey" className="size-3" />
      <Rule />
      <Icon name="mesh" className="size-3" />
    </div>
    <ul className="flex h-[145px] shrink-0 flex-col whitespace-nowrap bg-[#f8f8f8] pt-px text-[#26262c]">
      <li className="flex h-2 items-center">spf</li>
      <li className="flex h-[9px] items-center">ание 1</li>
      <li className="flex h-2 items-center pl-[3px] font-bold">1-й этаж</li>
      {structure.map(([icon, name], i) => (
        <li key={name} className={`flex h-[9px] items-center gap-[2px] pl-[3px] ${i === 3 ? "bg-[#d3d4d6]" : ""}`}>
          <Icon name={icon} className="size-[7px]" />{name}
        </li>
      ))}
    </ul>
    <div className="flex h-2 shrink-0 items-center justify-between bg-[#ececee] text-[#33363c]">
      <ChevronLeft className="size-[7px]" />
      <span className="ml-5 h-full flex-1 bg-[#c6c8cb]" />
      <ChevronRight className="size-[7px]" />
    </div>
    <div className="flex h-3 shrink-0 items-center border-t border-[#a9adb3]">
      <button className="flex items-center gap-[2px] bg-[#f1f2f3] px-px leading-[9px]"><Icon name="load" className="size-[7px]" />Структура</button>
      <button className="ml-1 flex items-center gap-[2px] leading-[9px]"><Icon name="lib" className="size-[7px]" />Бібліотеки</button>
    </div>
    <PanelHead title="Листи" />
    <div className="flex h-[19px] shrink-0 items-center gap-[2px] pl-[3px]">
      <Icon name="gridgear" className="size-[11px]" />
      <RefreshCw className="ml-[2px] size-[10px] text-[#2f80e4]" strokeWidth={3} />
      <Rule />
      <Icon name="addpage" className="size-[11px]" />
      <Icon name="docHash" className="ml-[3px] size-[11px]" />
      <Icon name="docSync" className="ml-[3px] size-[11px]" />
    </div>
    <div className="relative min-h-0 flex-1 bg-[#f8f8f8] pl-[3px] pt-px text-[#26262c]">
      <div className="flex h-2 items-center gap-[3px] font-bold"><ChevronDown className="size-[5px]" /><FolderOpen className="size-2" />Листи</div>
      <div className="flex h-[9px] items-center gap-[3px] pl-4"><FolderOpen className="size-2" />Креслення</div>
      <div className="absolute right-4 top-[47px] w-[66px] border border-[#bfc1c5] border-b-[#7f8288] border-r-[#7f8288] bg-[#f3f3f4] py-px leading-[6px]">
        {coords.map(([axis, value, color]) => (
          <p key={axis} className="flex h-[6px] gap-1"><span className="w-[14px] text-right text-[#30307c]">{axis}</span><span className={color}>{value}</span></p>
        ))}
      </div>
      <div className="absolute right-[5px] top-[82px] w-[51px] bg-[#cbcfd4] pb-1">
        <h2 className="flex h-3 items-center gap-[2px] whitespace-nowrap pl-[2px] font-bold text-[#555a63]">Projections an...<X className="size-[5px]" /></h2>
        <div className="grid grid-cols-3 gap-x-1 gap-y-[6px] px-1">
          {views.map((v) => (
            <button key={v} aria-label={v}><Icon name={v} className="size-3" /></button>
          ))}
        </div>
      </div>
    </div>
    <div className="flex h-[10px] shrink-0 items-center">
      <button className="flex w-[27px] items-center gap-px pl-px leading-[9px]"><Icon name="cube" className="size-2" />Види</button>
      <button className="flex items-center gap-px bg-[#f1f2f3] px-[2px] leading-[9px]"><Icon name="doc" className="size-[7px]" />Листи</button>
    </div>
  </aside>
);

const Tool = ({ icon, on }: { icon: string; on?: boolean }) => (
  <button aria-label={icon} className={`flex h-4 w-[15px] shrink-0 items-center justify-center ${on ? "border border-[#4a62a0] bg-[#aab5d2]" : ""}`}>
    <Icon name={icon} className="size-[11px]" />
  </button>
);

const Bulb = ({ fill, on }: { fill: string; on?: boolean }) => (
  <button aria-label="Видимість" className={`flex w-[15px] shrink-0 items-center justify-center ${on ? "h-[13px] border border-[#3f7ed8] bg-[#f3f7fd]" : "h-4"}`}>
    <Lightbulb className="size-[10px] text-[#6a6a60]" fill={fill} />
  </button>
);

const Pick = ({ label, value, w }: { label: string; value: string; w: string }) => (
  <span className={`mx-[2px] grid h-[9px] shrink-0 grid-cols-[1fr_6px] items-center bg-white ${w}`}>
    <select aria-label={label} className="h-[9px] min-w-0 appearance-none bg-transparent pl-[2px] leading-[9px] text-[#222]">
      <option>{value}</option>
    </select>
    <span className="flex h-full items-center justify-center bg-[#d5d8dc]"><Arrow /></span>
  </span>
);

const Split = ({ wide }: { wide?: boolean }) => <span className={`h-3 w-px shrink-0 bg-[#e6e8ea] ${wide ? "mx-[2px]" : "mx-px"}`} />;

const Toolbar = () => (
  <div className="flex h-[19px] shrink-0 items-center overflow-hidden border-b border-[#b0b4ba] pl-1">
    {["snapPoint", "snapLine", "snapAngle", "snapDots", "snapCurve"].map((n) => <Tool key={n} icon={n} on />)}
    <Split wide />
    <Tool icon="magnet" on />
    <Tool icon="magnetBlue" />
    <Split wide />
    <Tool icon="plane" on />
    <input aria-label="Висота" className="mx-[2px] h-2 w-[35px] shrink-0 bg-[#ececee]" />
    <Split />
    <Tool icon="seg" />
    <Tool icon="center" />
    <Split />
    <Tool icon="ortho" />
    <Split wide />
    <Tool icon="rotX" />
    <Tool icon="rotY" />
    <Tool icon="more" />
    <Split wide />
    {["cube", "cubeWhite", "cubeDark", "cubeCut", "cubeEye", "cubeDash"].map((n) => <Tool key={n} icon={n} />)}
    <Split wide />
    {["cubeBlue", "cubeGreen", "cubeFull"].map((n) => <Tool key={n} icon={n} />)}
    <Split wide />
    <Bulb fill="none" />
    <Bulb fill="#ffe92e" on />
    <Bulb fill="#ffe92e" />
    <Tool icon="copybox" />
    <Tool icon="layers" />
    <Pick label="Поверх" value="1-й этаж" w="w-[69px]" />
    <Tool icon="stack" />
    <Split wide />
    <Tool icon="loadNo" />
    <Pick label="Завантаження" value="4.Temp" w="w-[92px]" />
    <Tool icon="funnel" />
    <Split />
    <Tool icon="funnelPick" />
    <Tool icon="funnelTable" />
    <Split />
    <Tool icon="verify" />
    <Tool icon="more" />
    <Split />
    <button aria-label="Перемістити" className="mx-[2px]"><Move className="size-[11px] text-[#4c5064]" /></button>
    <button aria-label="Повернути" className="mx-[2px]"><RotateCw className="size-[10px] text-[#4c5064]" strokeWidth={3} /></button>
    <Split />
    <Tool icon="moveBlue" />
    <Tool icon="edit" />
    <Tool icon="editTwo" />
  </div>
);

const StatusBar = () => (
  <footer className="flex h-2 shrink-0 items-center overflow-hidden pl-[2px] leading-2">
    <p className="flex-1">Вкажіть об'єкт(и) для редагування</p>
    <span className="w-4 shrink-0 text-[#2c2f36]">NUM</span>
    <span className="w-[15px] shrink-0 text-[#8f939a]">ОРТО</span>
    <span className="w-10 shrink-0 border-r border-[#b0b4ba] bg-[#fbfbe6] pl-[2px] text-[#1fa01f]">-4200</span>
    <span className="w-10 shrink-0 border-r border-[#b0b4ba] bg-[#fbfbe6] pl-[2px] text-[#3b3bd0]">7800</span>
    <span className="w-10 shrink-0 border-r border-[#b0b4ba] bg-[#fbfbe6] pl-[2px] text-[#d03030]">0</span>
    <span className="w-[81px] shrink-0 bg-[#fbfbe6] pl-px text-[#1e9ea6]">8858.89</span>
  </footer>
);

export default function App() {
  return (
    <div className="relative flex h-screen w-full flex-col overflow-hidden bg-[#c9cdd2] font-['Noto_Sans',sans-serif] text-[5px] leading-[7px] text-[#2f323a]">
      <TitleBar />
      <RibbonTabs />
      <Ribbon />
      <div className="h-4 shrink-0 bg-[#f1f1f1]" />
      <div className="flex min-h-0 flex-1">
        <Properties />
        <Workspace />
        <Sidebar />
      </div>
      <Toolbar />
      <StatusBar />
      <button aria-label="САПФИР" className="absolute left-[2px] top-0 flex size-4 items-center justify-center rounded-full bg-[#e6eaec]">
        <Icon name="logo" className="size-3" />
      </button>
      <p className="absolute bottom-0 right-0 w-[60px] whitespace-nowrap border border-[#8c9096] bg-white pl-[2px] leading-[8px] text-[#55585f]">1 новое уведомление</p>
    </div>
  );
}
